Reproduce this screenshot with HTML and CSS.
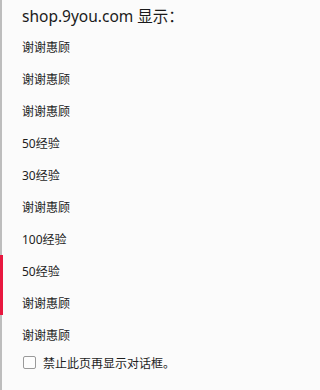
FILE: index.html
```html
<!DOCTYPE html>
<html lang="zh-CN">
<head>
<meta charset="utf-8">
<title>shop.9you.com 显示</title>
<link rel="stylesheet" href="styles.css">
</head>
<body>
<div class="dialog">
  <div class="accent"></div>
  <div class="title">shop.9you.com 显示：</div>
  <div class="rows">
    <div class="row">谢谢惠顾</div>
    <div class="row">谢谢惠顾</div>
    <div class="row">谢谢惠顾</div>
    <div class="row">50经验</div>
    <div class="row">30经验</div>
    <div class="row">谢谢惠顾</div>
    <div class="row">100经验</div>
    <div class="row">50经验</div>
    <div class="row">谢谢惠顾</div>
    <div class="row">谢谢惠顾</div>
  </div>
  <label class="check">
    <span class="box"></span>
    <span class="check-text">禁止此页再显示对话框。</span>
  </label>
</div>
</body>
</html>
```
FILE: styles.css
```css
html, body {
  margin: 0;
  padding: 0;
  background: #fbfbfb;
}
.dialog {
  position: relative;
  box-sizing: border-box;
  width: 303px;
  height: 390px;
  border-left: 2px solid #bdbdbd;
  padding-left: 20px;
  font-family: "Noto Sans", "Noto Sans CJK SC", sans-serif;
  color: #1e1e1e;
  background: #fbfbfb;
}
.accent {
  position: absolute;
  left: -2px;
  top: 255px;
  width: 3px;
  height: 60px;
  background: #e8173f;
}
.title {
  height: 32px;
  line-height: 32px;
  font-size: 15.5px;
  color: #1a1a1a;
}
.rows {
  display: flex;
  flex-direction: column;
}
.row {
  height: 32px;
  line-height: 32px;
  font-size: 12px;
}
.check {
  display: flex;
  align-items: center;
  gap: 7px;
  height: 21px;
  font-size: 12px;
  margin-left: 1px;
}
.box {
  box-sizing: border-box;
  width: 13px;
  height: 13px;
  border: 1px solid #9a9a9a;
  border-radius: 2px;
  background: #fdfdfd;
}
```
